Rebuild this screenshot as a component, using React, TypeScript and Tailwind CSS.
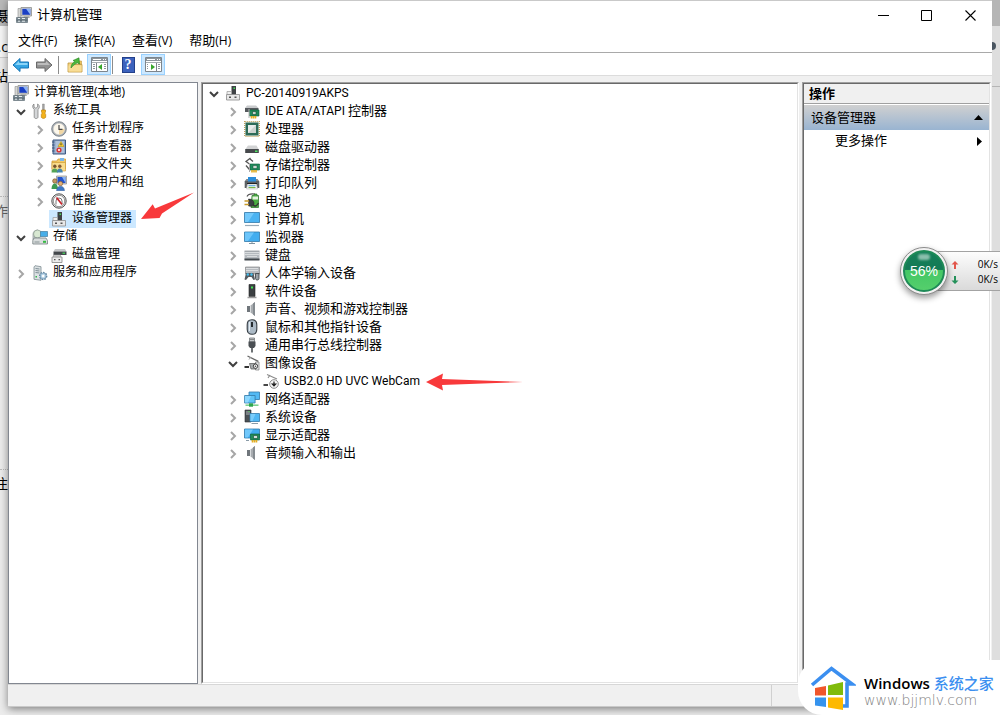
import type { ReactNode } from "react";

type IconProps = { children: ReactNode; className?: string };

function Icon({ children, className = "size-4" }: IconProps) {
  return (
    <svg viewBox="0 0 16 16" className={`${className} shrink-0`} aria-hidden="true">
      {children}
    </svg>
  );
}

function Chevron({ open }: { open?: boolean }) {
  return open ? (
    <svg viewBox="0 0 10 8" className="h-2 w-2.5" aria-hidden="true">
      <path d="M1 2l4 4 4-4" fill="none" stroke="#404040" strokeWidth="2" />
    </svg>
  ) : (
    <svg viewBox="0 0 8 10" className="h-2.5 w-2" aria-hidden="true">
      <path d="M2 1l4 4-4 4" fill="none" stroke="#a6a6a6" strokeWidth="2" />
    </svg>
  );
}

const icons = {
  manage: (
    <Icon>
      <path d="M5 .5h10.5v8.5H5z" fill="#d5d5d0" stroke="#8d8f8d" strokeWidth=".8" />
      <path d="M6.300 1.800h8v6h-8z" fill="#1a3fc4" />
      <path d="M10 1.800h4.300v6z" fill="#8db4f5" />
      <path d="M8 9.300h5l1 1.700H7z" fill="#a8aaa8" />
      <path d="M2 1.500h2.600v9H2z" fill="#d5d6d4" stroke="#8d8f8d" strokeWidth=".6" />
      <path d="M.5 10.500h11v2.700H.5zM.5 13.200h11v2.300H.5z" fill="#7b8a93" stroke="#56646d" strokeWidth=".6" />
      <path d="M2 11.500h2M6 11.500h3M2 14.200h2M6 14.200h3" stroke="#e7edf0" />
    </Icon>
  ),
  tools: (
    <Icon>
      <path d="M2 1v3l1.800 1.200L5.600 4V1c2 .8 2.500 4 .4 5.300V14c0 2-3.800 2-3.800 0V6.300C.2 5 .2 1.800 2 1z" fill="#d4d6d8" stroke="#777" strokeWidth=".7" />
      <path d="M10.500 1h1.800v6h-1.800z" fill="#a5a5a5" stroke="#777" strokeWidth=".4" />
      <path d="M9.500 7h4v2l-.7 1 .9 1.500v2.800c-.5 1.500-3.900 1.500-4.400 0v-2.800l.9-1.500-.7-1z" fill="#f3b21b" stroke="#b77b08" strokeWidth=".6" />
    </Icon>
  ),
  clock: (
    <Icon>
      <circle cx="8" cy="8" r="7.300" fill="#a6adb3" stroke="#6f767c" strokeWidth=".8" />
      <circle cx="8" cy="8" r="5.700" fill="#fdf8ec" stroke="#c9c9c9" strokeWidth=".5" />
      <path d="M8 8h5.500A5.500 5.500 0 0 1 8 13.500z" fill="#f1d7a4" />
      <path d="M8 4v4.300h3.500" fill="none" stroke="#4a4a4a" strokeWidth="1.200" />
    </Icon>
  ),
  events: (
    <Icon>
      <path d="M2 1h12.500v14H2z" fill="#8fa7c8" stroke="#3f5a83" />
      <path d="M4.500 3h8.500M4.500 5h8.500M4.500 7h8.500M4.500 9h8.500M4.500 11h8.500M4.500 13h8.500" stroke="#dce7f4" strokeWidth=".8" />
      <path d="M1 3h2.500M1 6h2.500M1 9h2.500M1 12h2.500" stroke="#304d77" strokeWidth=".9" />
      <path d="M10 2.500l3 5H7z" fill="#ffd42a" stroke="#b58a00" strokeWidth=".5" />
      <path d="M10 4.300v2" stroke="#333" />
      <circle cx="8" cy="11" r="2.600" fill="#d93636" />
      <path d="M7 10l2 2m0-2l-2 2" stroke="#fff" strokeWidth=".8" />
    </Icon>
  ),
  shared: (
    <Icon>
      <path d="M1 4h5l1-2h7.500v10H1z" fill="#f4ca65" stroke="#c9972e" strokeWidth=".7" />
      <path d="M9 1h4v3H9z" fill="#7bb7e8" />
      <path d="M1 5.500h13.500V14H1z" fill="#f9dc8d" stroke="#c9972e" strokeWidth=".6" />
      <circle cx="3.800" cy="9.200" r="1.700" fill="#77552e" />
      <path d="M.5 15.500c0-5.500 6.500-5.500 6.500 0z" fill="#54a457" />
      <circle cx="8.800" cy="9.200" r="1.700" fill="#8a5c33" />
      <path d="M5.800 15.500c0-5.500 6-5.500 6 0z" fill="#4585ad" />
    </Icon>
  ),
  users: (
    <Icon>
      <path d="M5.500 1h10v8h-10z" fill="#d1d1cc" stroke="#8c8c8c" strokeWidth=".7" />
      <path d="M6.500 2h8v6h-8z" fill="#2452cb" />
      <path d="M11 2h3.500v6z" fill="#86b3f4" />
      <circle cx="3.800" cy="6" r="2.200" fill="#c49761" stroke="#735128" strokeWidth=".6" />
      <path d="M.5 14c0-7.500 6.500-7.500 6.500 0z" fill="#3d9a52" />
      <circle cx="9.500" cy="8.500" r="2.200" fill="#e3b077" stroke="#735128" strokeWidth=".6" />
      <path d="M5.500 15.700c0-6 8-6 8 0z" fill="#3f78c4" stroke="#2a548c" strokeWidth=".4" />
    </Icon>
  ),
  perf: (
    <Icon>
      <circle cx="8" cy="8" r="7.200" fill="#e0e0e0" stroke="#444" strokeWidth=".9" />
      <circle cx="8" cy="8" r="5.700" fill="#fff" stroke="#555" strokeWidth=".6" />
      <path d="M5 11.500V8a3 3 0 0 1 6 0v3" fill="none" stroke="#777" />
      <path d="M5.500 4.500l5.500 7" stroke="#c8232b" strokeWidth="1.700" />
    </Icon>
  ),
  device: (
    <Icon>
      <path d="M6.500 1H11v9H6.500z" fill="#3f4245" />
      <path d="M8.500 2.500H10V4H8.500z" fill="#45df58" />
      <path d="M2 6.500h4.500v3H2z" fill="#efefef" stroke="#999" strokeWidth=".7" />
      <path d="M1.500 9.500h13V15h-13z" fill="#e8e8e8" stroke="#8b8b8b" strokeWidth=".8" />
      <path d="M4 11.500h2V13H4zM9.500 11.500h2V13h-2z" fill="#555" />
    </Icon>
  ),
  storage: (
    <Icon>
      <path d="M1 5c0-2 2-4 5-4v10H1z" fill="#c7cdce" stroke="#8c9496" strokeWidth=".7" />
      <circle cx="5.500" cy="5" r="4" fill="#d8e8d2" stroke="#87968c" strokeWidth=".7" />
      <path d="M8.500 2.500h7v5h-7z" fill="#48aee8" stroke="#437d9d" strokeWidth=".7" />
      <path d="M2 9h12l1.500 2.500v3.500H.8v-3.500z" fill="#d9dddd" stroke="#747d80" strokeWidth=".8" />
      <path d="M2.500 13h5" stroke="#899496" />
      <path d="M11 11.800h3v2h-3z" fill="#35ba42" />
    </Icon>
  ),
  diskmgmt: (
    <Icon>
      <path d="M4 2h10l1.500 2.500H2.500z" fill="#c4c6c8" />
      <path d="M2.500 4.500h13v3.500h-13z" fill="#44484c" />
      <path d="M11.500 5.600h2.500v1.200h-2.500z" fill="#4ae05d" />
      <path d="M2.500 8h7v2.500h-7z" fill="#d9d9d9" stroke="#999" strokeWidth=".6" />
      <path d="M1 10h10v5.500H1z" fill="#ededed" stroke="#858585" strokeWidth=".8" />
      <path d="M3 12h1.500v1.300H3zM7.500 12H9v1.300H7.500z" fill="#555" />
    </Icon>
  ),
  services: (
    <Icon>
      <path d="M3 .7l6 1v13.600l-7-1V2z" fill="#dce2e4" stroke="#7c8a90" strokeWidth=".8" />
      <path d="M3.500 3.500l4 .5M3.500 5.500l4 .5M3.500 7.500l4 .5" stroke="#7e8e96" />
      <path d="M3.500 11h1.500v1.500H3.500z" fill="#32b54a" />
      <circle cx="11.200" cy="11" r="3.300" fill="#b4d2e8" stroke="#60859f" strokeWidth="1.800" strokeDasharray="1.500 1" />
      <circle cx="11.200" cy="11" r="2.900" fill="#b8d4e8" stroke="#6d92ac" strokeWidth=".6" />
      <circle cx="11.200" cy="11" r="1.200" fill="#fff" />
    </Icon>
  ),
  ide: (
    <Icon>
      <path d="M3 2.500h9L14.500 5H1z" fill="#c8cacc" />
      <path d="M1 5h13.500v4H1z" fill="#55595d" />
      <path d="M5.500 7h9.500v6H5.500z" fill="#1e8a5a" stroke="#075c37" strokeWidth=".6" />
      <path d="M8.500 8.500H12v3H8.500z" fill="#c7d5ce" stroke="#0b4d31" strokeWidth=".6" />
      <path d="M7.500 13v2.500M9.500 13v2.500M11.500 13v2.500" stroke="#e2ac21" strokeWidth="1.600" />
      <path d="M5 6v9" stroke="#b4b4b4" />
    </Icon>
  ),
  cpu: (
    <Icon>
      <path d="M.7.700h14.600v14.600H.7z" fill="none" stroke="#b8954a" strokeWidth="1.200" strokeDasharray="1 1" />
      <path d="M1.500 1.500h13v13h-13z" fill="#2d6b57" />
      <path d="M4 4h8v8H4z" fill="#e9ecea" />
      <path d="M12 4v8H4z" fill="#cdd3cf" />
    </Icon>
  ),
  disk: (
    <Icon>
      <path d="M4 6.500h8.500L14.500 10h-13z" fill="#d2d3d4" />
      <path d="M1.200 10h13.600v4H1.200z" fill="#46494c" />
      <path d="M11 11.500h2.500V13H11z" fill="#50e563" />
    </Icon>
  ),
  storagectl: (
    <Icon>
      <path d="M6.500 1L2 4.500 5.500 7M5.500 1.500L9 4.500M2 8.500L5 12h2" fill="none" stroke="#555" strokeWidth="1.300" />
      <path d="M6 7h9.500v6H6z" fill="#218e5d" stroke="#06603a" strokeWidth=".6" />
      <path d="M9 8.500h4v3H9z" fill="#ccd9d2" stroke="#0b4d31" strokeWidth=".5" />
      <path d="M8 13v2.500M10 13v2.500M12 13v2.500" stroke="#e2ac21" strokeWidth="1.600" />
      <path d="M5.500 6v9" stroke="#aaa" />
    </Icon>
  ),
  printer: (
    <Icon>
      <path d="M2.500 4h11l1.800 2.500V13H.7V6.500z" fill="#5b6064" />
      <path d="M2 5h12" stroke="#a7adb1" />
      <path d="M4 2h8v4.500H4z" fill="#2a8ddb" />
      <path d="M3.500 9h9l1 5h-11z" fill="#f5f5f5" stroke="#bbb" strokeWidth=".6" />
      <path d="M3 8.500h10" stroke="#222" />
      <path d="M4.500 10.700h7" stroke="#4fa5dd" />
      <path d="M4.500 12.500h7" stroke="#79b846" strokeWidth="1.200" />
    </Icon>
  ),
  battery: (
    <Icon>
      <path d="M3 3.500C4 1 7 .5 11 1" fill="none" stroke="#555" strokeWidth="1.200" />
      <path d="M8 2.500h2V1h3v1.500h1.500v12H7z" fill="#4bad42" stroke="#2d6e2b" strokeWidth=".7" />
      <path d="M8.500 3.500H14v3H8.500z" fill="#e4f3df" />
      <path d="M4.500 6c3.500 0 5.500 2 5.500 4.300S8 14 4.500 13z" fill="#3e4143" stroke="#222" strokeWidth=".5" />
      <path d="M.5 8H5M.5 11.500H5" stroke="#c79b2d" strokeWidth="1.300" />
      <path d="M9 11.500c2 3 4 1 5.500-1.500" fill="none" stroke="#333" strokeWidth="1.400" />
    </Icon>
  ),
  computer: (
    <Icon>
      <path d="M.5 1.500h15v10H.5z" fill="#4bb3f2" stroke="#3278a8" strokeWidth=".8" />
      <path d="M1 2h9L4 11H1z" fill="#73c9fb" />
      <path d="M1 14.500h14" stroke="#9aabb8" strokeWidth="1.200" />
    </Icon>
  ),
  monitor: (
    <Icon>
      <path d="M.5 3h15v9.500H.5z" fill="#42adef" stroke="#3278a8" strokeWidth=".8" />
      <path d="M1 3.500h9L4 12H1z" fill="#6cc5fa" />
      <path d="M5 14.500h6M8 12.500v2" stroke="#8193a0" />
    </Icon>
  ),
  keyboard: (
    <Icon>
      <path d="M.5 4h15v9H.5z" fill="#b4b9be" />
      <path d="M.5 11.500h15v2H.5z" fill="#41474c" />
      <path d="M1.500 5.500h13M1.500 7.500h13M3.500 9.500h9" stroke="#fff" strokeDasharray="1 1" />
      <path d="M.5 4h15" stroke="#858b91" strokeWidth=".7" />
    </Icon>
  ),
  hid: (
    <Icon>
      <path d="M1.500 2h14v7h-14z" fill="#b7bbc0" stroke="#777" strokeWidth=".6" />
      <path d="M2.500 3.500h12M2.500 5.500h12" stroke="#fff" strokeDasharray="1 1" />
      <path d="M.5 14.500L2 8h7.500l1.500 6.500-1.500.5-2-3h-3L2 15z" fill="#555b61" />
      <circle cx="3.800" cy="9.500" r="1.200" fill="#44bff0" />
      <circle cx="7.500" cy="9.500" r="1.200" fill="#44bff0" />
      <path d="M11.500 8.500H15v5c0 2-3.500 2-3.500 0z" fill="#9aa1a7" stroke="#363b3f" strokeWidth=".8" />
    </Icon>
  ),
  software: (
    <Icon>
      <path d="M5 1.500h6v12H5z" fill="#3b3f42" stroke="#222" strokeWidth=".6" />
      <path d="M7 3.500h2v2H7z" fill="#43e253" />
      <path d="M3.500 14.500h9" stroke="#9d9d9d" strokeWidth="1.500" />
    </Icon>
  ),
  speaker: (
    <Icon>
      <path d="M3 5h3v6H3z" fill="#70767b" />
      <path d="M6 5l5-4v14l-5-4z" fill="#a9adb1" />
      <path d="M9 2.600L11 1v14l-2-1.600z" fill="#858b90" />
      <path d="M6.500 5v6" stroke="#d9dcde" />
    </Icon>
  ),
  mouse: (
    <Icon>
      <path d="M8 .7c3.800 0 4.800 2.300 4.800 5v4.500c0 3-1.800 5.100-4.800 5.100s-4.800-2.100-4.800-5.100V5.700c0-2.700 1-5 4.800-5z" fill="#acbac6" stroke="#363d43" strokeWidth="1.100" />
      <path d="M5.500 3v9" stroke="#e4ecf2" />
      <path d="M8 3v5" stroke="#252b30" strokeWidth="2" />
    </Icon>
  ),
  usb: (
    <Icon>
      <path d="M5.500 1h5v4h-5z" fill="#c6c9cb" stroke="#72777a" strokeWidth=".8" />
      <path d="M6.500 2.500h1M8.500 2.500h1" stroke="#444" />
      <path d="M4.500 4.500h7V9L10 11H6L4.500 9z" fill="#4a4f53" />
      <path d="M8 11v4.500" stroke="#5d6265" strokeWidth="1.800" />
    </Icon>
  ),
  camera: (
    <Icon>
      <path d="M3.500 1l10.800 5.300" stroke="#666" strokeWidth="1.300" />
      <path d="M5 4.500l2-2.500" stroke="#999" />
      <path d="M11.500 7H15v8h-3.500z" fill="#e2e4e5" stroke="#777" strokeWidth=".7" />
      <path d="M5.500 8.500H12V14H7z" fill="#a6aaac" stroke="#555" strokeWidth=".7" />
      <circle cx="11.500" cy="11.200" r="2.200" fill="#f8f8f8" stroke="#444" />
      <circle cx="11.500" cy="11.200" r=".8" fill="#444" />
      <path d="M.5 12h4.500" stroke="#333" strokeWidth="2" />
    </Icon>
  ),
  webcam: (
    <Icon>
      <path d="M4 1.500l10 4.500M5 5l2-3" stroke="#8b8b8b" strokeWidth="1.100" />
      <path d="M.5 12H5" stroke="#333" strokeWidth="1.800" />
      <circle cx="11" cy="11" r="4.300" fill="#f5f5f5" stroke="#8b8b8b" />
      <path d="M11 8.500V12M9.300 11.200L11 13l1.700-1.800z" fill="#222" stroke="#222" strokeWidth="1.200" />
    </Icon>
  ),
  network: (
    <Icon>
      <path d="M5 1h10.500v7.500H5z" fill="#52b9f4" stroke="#3278a8" strokeWidth=".8" />
      <path d="M.6 4.500h10.500V12H.6z" fill="#61c4f7" stroke="#3278a8" strokeWidth=".8" />
      <path d="M1 5h6l-3 6.500H1z" fill="#8bd7ff" />
      <path d="M1.500 14.200h13" stroke="#7ed08e" strokeWidth="1.600" />
      <path d="M5 12.300h4V15.700H5z" fill="#2fa550" />
    </Icon>
  ),
  system: (
    <Icon>
      <path d="M1 1h6v12H1z" fill="#4b5054" stroke="#2d3133" strokeWidth=".6" />
      <path d="M2 3h4M2 5h4" stroke="#aeb4b8" />
      <path d="M4.500 2h1v1h-1z" fill="#46e055" />
      <path d="M6 4.500h9.500v8H6z" fill="#50b7f3" stroke="#3278a8" strokeWidth=".8" />
      <path d="M6.500 5h5l-3 7h-2z" fill="#7acdfb" />
      <path d="M7.500 14.500H14" stroke="#8a9ba7" />
    </Icon>
  ),
  display: (
    <Icon>
      <path d="M.5 2h15v9H.5z" fill="#42adef" stroke="#3278a8" strokeWidth=".8" />
      <path d="M1 2.500h8L4 10.500H1z" fill="#71c8fb" />
      <path d="M6.500 7h9v6h-9z" fill="#248b58" stroke="#075c37" strokeWidth=".6" />
      <path d="M9.500 8.500h4v3h-4z" fill="#d4ddd8" stroke="#0b4d31" strokeWidth=".6" />
      <path d="M8.500 13v2.500M10.500 13v2.500M12.500 13v2.500" stroke="#e2ac21" strokeWidth="1.600" />
      <path d="M2 13.500h3" stroke="#8a9ba7" />
    </Icon>
  ),
};

type IconName = keyof typeof icons;
type Node = {
  icon: IconName;
  label: string;
  latin?: string;
  state?: "open" | "closed";
  selected?: boolean;
  children?: Node[];
};

const consoleTree: Node[] = [
  {
    icon: "tools",
    label: "系统工具",
    state: "open",
    children: [
      { icon: "clock", label: "任务计划程序", state: "closed" },
      { icon: "events", label: "事件查看器", state: "closed" },
      { icon: "shared", label: "共享文件夹", state: "closed" },
      { icon: "users", label: "本地用户和组", state: "closed" },
      { icon: "perf", label: "性能", state: "closed" },
      { icon: "device", label: "设备管理器", selected: true },
    ],
  },
  {
    icon: "storage",
    label: "存储",
    state: "open",
    children: [{ icon: "diskmgmt", label: "磁盘管理" }],
  },
  { icon: "services", label: "服务和应用程序", state: "closed" },
];

const deviceTree: Node[] = [
  {
    icon: "device",
    latin: "PC-20140919AKPS",
    label: "",
    state: "open",
    children: [
      { icon: "ide", latin: "IDE ATA/ATAPI ", label: "控制器", state: "closed" },
      { icon: "cpu", label: "处理器", state: "closed" },
      { icon: "disk", label: "磁盘驱动器", state: "closed" },
      { icon: "storagectl", label: "存储控制器", state: "closed" },
      { icon: "printer", label: "打印队列", state: "closed" },
      { icon: "battery", label: "电池", state: "closed" },
      { icon: "computer", label: "计算机", state: "closed" },
      { icon: "monitor", label: "监视器", state: "closed" },
      { icon: "keyboard", label: "键盘", state: "closed" },
      { icon: "hid", label: "人体学输入设备", state: "closed" },
      { icon: "software", label: "软件设备", state: "closed" },
      { icon: "speaker", label: "声音、视频和游戏控制器", state: "closed" },
      { icon: "mouse", label: "鼠标和其他指针设备", state: "closed" },
      { icon: "usb", label: "通用串行总线控制器", state: "closed" },
      {
        icon: "camera",
        label: "图像设备",
        state: "open",
        children: [{ icon: "webcam", latin: "USB2.0 HD UVC WebCam", label: "" }],
      },
      { icon: "network", label: "网络适配器", state: "closed" },
      { icon: "system", label: "系统设备", state: "closed" },
      { icon: "display", label: "显示适配器", state: "closed" },
      { icon: "speaker", label: "音频输入和输出", state: "closed" },
    ],
  },
];

function Tree({ nodes, nested }: { nodes: Node[]; nested?: boolean }) {
  return (
    <ul className={nested ? "pl-[19px]" : ""}>
      {nodes.map((node) => (
        <li key={`${node.latin ?? ""}${node.label}`}>
          <div className="flex h-[18px] items-center whitespace-nowrap">
            {node.state ? (
              <button
                type="button"
                aria-label={`${node.state === "open" ? "折叠" : "展开"} ${node.latin ?? ""}${node.label}`}
                className="flex h-full w-[19px] items-center justify-center pt-0.5"
              >
                <Chevron open={node.state === "open"} />
              </button>
            ) : (
              <span className="w-[19px]" />
            )}
            <button
              type="button"
              className={`flex h-full items-center gap-[5px] pr-1 pl-0.5 ${node.selected ? "bg-[#cce8ff]" : ""}`}
            >
              {icons[node.icon]}
              <span className="pb-0.5 leading-4">
                {node.latin && <span className="font-['Roboto',sans-serif] text-xs whitespace-pre">{node.latin}</span>}
                {node.label}
              </span>
            </button>
          </div>
          {node.children && <Tree nodes={node.children} nested />}
        </li>
      ))}
    </ul>
  );
}

function PanelIcon({ flip }: { flip?: boolean }) {
  return (
    <svg viewBox="0 0 17 15" className="h-[15px] w-[17px]" aria-hidden="true">
      <path d="M.5.5h16v14H.5z" fill="#fff" stroke="#7d858c" />
      <path d="M1 1h15v3H1z" fill="#8c959c" />
      <path d="M2 2.500h8M12 2.500h1M14 2.500h1" stroke="#fff" />
      <path d="M1 5.500h15" stroke="#a5acb1" />
      <path d={flip ? "M11.500 6v8" : "M5.500 6v8"} stroke="#7d858c" />
      <path
        d={flip ? "M13 7.500h2M13 9.500h2M13 11.500h2M2 7.500h1M2 9.500h1M2 11.500h1" : "M2 7.500h2M2 9.500h2M2 11.500h2M13 7.500h2M13 9.500h2M13 11.500h2"}
        stroke="#8c959c"
      />
      <path d={flip ? "M6 7l4 3-4 3z" : "M11 7l-4 3 4 3z"} fill="#37a62b" />
    </svg>
  );
}

function Toolbar() {
  return (
    <div className="flex h-[23px] shrink-0 items-center border-b border-[#dcdcdc] pt-px pl-1">
      <button type="button" aria-label="后退" className="flex w-[23px] items-center">
        <svg viewBox="0 0 18 16" className="h-4 w-[18px]" aria-hidden="true">
          <path d="M1 8l7-6.500V5h8.500v6H8v3.500z" fill="#35a5e3" stroke="#1674b5" />
          <path d="M3 8l4-4v2h8.500v2z" fill="#8ad4f8" />
        </svg>
      </button>
      <button type="button" aria-label="前进" className="flex w-[23px] items-center">
        <svg viewBox="0 0 18 16" className="h-4 w-[18px]" aria-hidden="true">
          <path d="M17 8l-7-6.500V5H1.500v6H10v3.500z" fill="#929292" stroke="#696969" />
          <path d="M15 8l-4-4v2H2.500v2z" fill="#bcbcbc" />
        </svg>
      </button>
      <span className="h-[18px] w-px bg-[#8c8c8c]" />
      <button type="button" aria-label="向上一级" className="flex w-7 items-center justify-center pl-1">
        <Icon>
          <path d="M1 6h5l1.500 1.500H15V15H1z" fill="#f5d581" stroke="#bd963c" strokeWidth=".8" />
          <path d="M11 4h3.500v3H11z" fill="#f1c85f" stroke="#bd963c" strokeWidth=".6" />
          <path d="M1.500 8.500h13v6h-13z" fill="#f8dd96" />
          <path d="M4 11c0-3 1-5 4-6.500L6 3.500 12 .8 12.500 7 10.500 5.800C8 7 6 8.500 4 11z" fill="#4cb83e" stroke="#278321" strokeWidth=".6" />
        </Icon>
      </button>
      <button type="button" aria-label="显示或隐藏控制台树" className="flex h-full w-6 items-center justify-center border border-[#99d1ff] bg-[#cce8ff]">
        <PanelIcon />
      </button>
      <span className="ml-px h-[18px] w-px bg-[#8c8c8c]" />
      <button type="button" aria-label="帮助" className="flex w-7 items-center justify-center pl-0.5">
        <span className="flex h-4 w-[13px] items-center justify-center border border-[#23408a] bg-[#3c62bd] font-['Liberation_Serif',serif] text-sm font-bold text-white">?</span>
      </button>
      <button type="button" aria-label="显示或隐藏操作窗格" className="flex h-full w-6 items-center justify-center border border-[#99d1ff] bg-[#cce8ff]">
        <PanelIcon flip />
      </button>
    </div>
  );
}

const menus = [
  ["文件", "(F)"],
  ["操作", "(A)"],
  ["查看", "(V)"],
  ["帮助", "(H)"],
];

function SpeedRow({ down }: { down?: boolean }) {
  return (
    <div className="flex items-center justify-between">
      <svg viewBox="0 0 8 8" className="size-2" aria-hidden="true">
        {down ? (
          <path d="M4 8L.5 4.500H3V0h2v4.500h2.500z" fill="#24915a" />
        ) : (
          <path d="M4 0L.5 3.500H3V8h2V3.500h2.500z" fill="#e2574c" />
        )}
      </svg>
      0K/s
    </div>
  );
}

function SpeedWidget() {
  return (
    <aside className="absolute top-[247px] right-0 flex items-center" aria-label="网速">
      <div className="z-10 flex size-12 items-center justify-center rounded-full border border-[#8c8c8c] bg-[#f2f2f2] shadow-[0_3px_6px_#0006]">
        <div className="relative flex size-[42px] items-center justify-center overflow-hidden rounded-full border-2 border-[#1e8a57] bg-[linear-gradient(#16805a_0%,#137a55_46%,#43c765_47%,#55cf6c_100%)] text-sm text-white">
          <span className="absolute top-0.5 h-1.5 w-3 rounded-full bg-white/50 blur-[1px]" />
          <span className="relative font-['Liberation_Sans',sans-serif]">56%</span>
        </div>
      </div>
      <div className="-ml-6 flex h-10 w-[76px] flex-col justify-center border-y border-[#a3a3a3] bg-linear-to-b from-[#fdfdfd] to-[#dadada] pt-0.5 pr-0.5 pl-[27px] text-[10px] leading-[15px] text-black">
        <SpeedRow />
        <SpeedRow down />
      </div>
    </aside>
  );
}

function SiteBadge() {
  return (
    <a
      href="#home"
      className="absolute right-0 bottom-0 flex h-[55px] w-[202px] items-center gap-2 rounded-l-[24px] bg-white pl-3"
    >
      <svg viewBox="0 0 46 46" className="size-[46px] shrink-0" aria-hidden="true">
        <path d="M2 20L21.500 3.500 42 19H37V41H31" fill="none" stroke="#3b8ff0" strokeWidth="3.600" />
        <path d="M5 23l11-2v9.500H5z" fill="#f0562b" />
        <path d="M18 20.500l15-3.500v13H18z" fill="#80bb0b" />
        <path d="M5 32.500h11V42L5 40.500z" fill="#3593ee" />
        <path d="M18 32.500h15V45l-15-2.500z" fill="#fdb900" />
      </svg>
      <span className="flex flex-col pt-1 whitespace-nowrap">
        <span className="text-[15px] leading-5 font-medium text-black">
          <span className="font-semibold">Windows</span> <span className="text-[#3b8ff0]">系统之家</span>
        </span>
        <span className="font-['DejaVu_Sans',sans-serif] text-sm leading-[14px] font-extralight text-[#808080]">www.bjjmlv.com</span>
      </span>
    </a>
  );
}

export default function App() {
  return (
    <div className="relative flex h-screen overflow-hidden bg-[#ececec] font-['Open_Sans','Noto_Sans_CJK_SC',sans-serif] text-[13px] text-black">
      <div className="flex w-2 shrink-0 flex-col overflow-hidden text-sm leading-5 whitespace-nowrap" aria-hidden="true">
        <div className="flex h-[26px] shrink-0 items-end justify-end bg-[#b9b9b9]">摄</div>
        <div className="flex h-8 shrink-0 items-end justify-end border-b border-[#ccc] bg-[#f5f5f5]">.c</div>
        <div className="mt-2 flex shrink-0 justify-end">站</div>
        <div className="mt-[110px] shrink-0 border-t border-dotted border-[#bbb]" />
        <div className="mt-1 flex shrink-0 justify-end text-[#666]">作</div>
        <div className="mt-[248px] shrink-0 border-t border-dotted border-[#bbb]" />
        <div className="mt-1 flex shrink-0 justify-end">注</div>
      </div>

      <main className="mb-2 flex min-w-0 flex-1 flex-col border-t border-b border-[#c9c9c9] bg-white shadow-[0_2px_8px_#0007]">
        <header className="flex h-7 shrink-0 items-center gap-[5px] pl-2">
          {icons.manage}
          <h1 className="flex-1">计算机管理</h1>
          <button type="button" aria-label="最小化" className="flex h-full w-[43px] items-center justify-center">
            <svg viewBox="0 0 11 11" className="size-[11px]" aria-hidden="true"><path d="M0 5.500h11" stroke="#000" /></svg>
          </button>
          <button type="button" aria-label="最大化" className="-ml-[5px] flex h-full w-[43px] items-center justify-center">
            <svg viewBox="0 0 11 11" className="size-[11px]" aria-hidden="true"><path d="M.5.5h10v10H.5z" fill="none" stroke="#000" /></svg>
          </button>
          <button type="button" aria-label="关闭" className="-ml-1 flex h-full w-[43px] items-center justify-center">
            <svg viewBox="0 0 11 11" className="size-[11px]" aria-hidden="true"><path d="M.5.5l10 10m0-10l-10 10" stroke="#000" strokeWidth="1.100" /></svg>
          </button>
        </header>

        <nav className="flex h-6 shrink-0 items-center gap-[17px] border-b border-[#a9a9a9] pl-2.5" aria-label="菜单栏">
          {menus.map(([name, key]) => (
            <button type="button" key={name}>
              {name}<span className="text-xs">{key}</span>
            </button>
          ))}
        </nav>

        <Toolbar />

        <div className="flex min-h-0 flex-1 gap-[3px] bg-[#f0f0f0] pt-1.5">
          <nav className="w-[190px] shrink-0 overflow-hidden border border-[#828790] bg-white pt-px text-xs" aria-label="控制台树">
            <button type="button" className="flex h-[18px] items-center gap-[5px] pl-1">
              {icons.manage}
              <span className="pb-0.5 leading-4">计算机管理(本地)</span>
            </button>
            <div className="pl-0.5">
              <Tree nodes={consoleTree} />
            </div>
          </nav>

          <section className="flex min-w-0 flex-1 overflow-hidden border border-t-[#a0a0a0] border-r-white border-b-white border-l-[#a0a0a0] bg-white" aria-label="设备">
            <div className="min-w-0 flex-1 border border-t-[#696969] border-r-[#e3e3e3] border-b-[#e3e3e3] border-l-[#696969] pl-px">
              <Tree nodes={deviceTree} />
            </div>
          </section>

          <aside className="mr-px flex w-[189px] shrink-0 border border-t-[#a0a0a0] border-r-white border-b-white border-l-[#a0a0a0] bg-white" aria-label="操作">
            <div className="min-w-0 flex-1 border border-t-[#696969] border-r-[#e3e3e3] border-b-[#e3e3e3] border-l-[#696969]">
              <h2 className="flex h-5 items-center border-b border-[#a0a0a0] bg-[#f0f0f0] pl-[5px] font-bold">操作</h2>
              <button type="button" className="mt-px flex h-[25px] w-full items-center justify-between bg-linear-to-b from-[#d0d0d0] to-[#99b4d1] pr-1.5 pl-[7px]">
                设备管理器
                <svg viewBox="0 0 9 5" className="h-[5px] w-[9px]" aria-hidden="true"><path d="M0 5l4.500-5L9 5z" /></svg>
              </button>
              <button type="button" className="flex h-[22px] w-full items-center justify-between pr-[7px] pl-[31px]">
                更多操作
                <svg viewBox="0 0 5 9" className="h-[9px] w-[5px]" aria-hidden="true"><path d="M0 0l5 4.500L0 9z" /></svg>
              </button>
            </div>
          </aside>
        </div>

        <footer className="flex h-[22px] shrink-0 border-t border-[#d7d7d7] bg-[#f0f0f0]">
          <span className="flex-1" />
          <span className="w-[221px] border-l border-[#d0d0d0]" />
        </footer>
      </main>

      <div className="flex w-2 shrink-0 flex-col bg-[#dedede]" aria-hidden="true">
        <div className="h-[26px] bg-[#b5b5b5]" />
        <div className="mt-4 h-2 w-1 rounded-r-full bg-[#4a5560]" />
        <div className="mt-9 border-t border-[#b5b5b5]" />
      </div>

      <svg viewBox="0 0 54 28" className="absolute top-[191px] left-[141px] h-7 w-[54px]" aria-hidden="true">
        <path d="M0 28L11.700 13.300 14 17.500 53 1.500 21 22.500 18.500 27z" fill="#f8393b" />
      </svg>
      <svg viewBox="0 0 98 18" className="absolute top-[373px] left-[426px] h-[18px] w-[98px]" aria-hidden="true">
        <path d="M0 9L17 .5 16 6l81 3-81 3 1 5.500z" fill="#f8393b" />
      </svg>

      <SpeedWidget />
      <SiteBadge />
    </div>
  );
}
